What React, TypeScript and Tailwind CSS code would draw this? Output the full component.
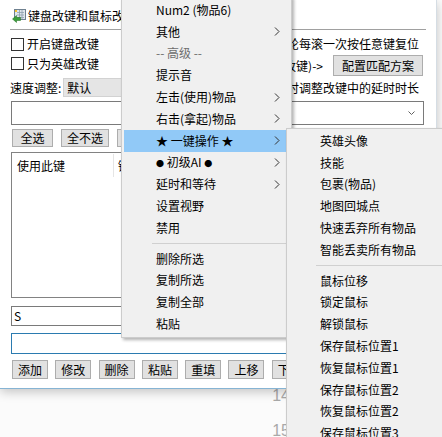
import React from "react";

const font = "font-['Noto_Sans_CJK_SC','Noto_Sans',sans-serif]";

function Chevron() {
  return (
    <svg width="6" height="9" viewBox="0 0 6 9" className="shrink-0">
      <path d="M1 0.5 L5 4.5 L1 8.5" fill="none" stroke="#333" strokeWidth="1" />
    </svg>
  );
}

function Btn({ label, w, className = "" }: { label: string; w: string; className?: string }) {
  return (
    <div
      className={`${w} h-full shrink-0 bg-[#e1e1e1] border border-[#adadad] flex items-center justify-center text-[12px] leading-none text-black ${className}`}
    >
      {label}
    </div>
  );
}

function Check({ label }: { label: string }) {
  return (
    <div className="flex items-center">
      <div className="w-[13px] h-[13px] border border-[#333] bg-white" />
      <span className="ml-[3px] text-[12px] leading-none">{label}</span>
    </div>
  );
}

type Item = { label?: React.ReactNode; arrow?: boolean; disabled?: boolean; active?: boolean; sep?: boolean };

const Dot = () => <span className="text-[8px] align-middle">●</span>;

const mainItems: Item[] = [
  { label: "Num2 (物品6)" },
  { label: "其他", arrow: true },
  { label: "-- 高级 --", disabled: true },
  { label: "提示音" },
  { label: "左击(使用)物品", arrow: true },
  { label: "右击(拿起)物品", arrow: true },
  { label: "★ 一键操作 ★", arrow: true, active: true },
  {
    label: (
      <>
        <Dot /> 初级AI <Dot />
      </>
    ),
    arrow: true,
  },
  { label: "延时和等待", arrow: true },
  { label: "设置视野" },
  { label: "禁用" },
  { sep: true },
  { label: "删除所选" },
  { label: "复制所选" },
  { label: "复制全部" },
  { label: "粘贴" },
];

const subItems: Item[] = [
  { label: "英雄头像" },
  { label: "技能" },
  { label: "包裹(物品)" },
  { label: "地图回城点" },
  { label: "快速丢弃所有物品" },
  { label: "智能丢卖所有物品" },
  { sep: true },
  { label: "鼠标位移" },
  { label: "锁定鼠标" },
  { label: "解锁鼠标" },
  { label: "保存鼠标位置1" },
  { label: "恢复鼠标位置1" },
  { label: "保存鼠标位置2" },
  { label: "恢复鼠标位置2" },
  { label: "保存鼠标位置3" },
];

function MenuRows({ items, pl, sepMl }: { items: Item[]; pl: string; sepMl: string }) {
  return (
    <>
      {items.map((it, i) =>
        it.sep ? (
          <div key={i} className="h-[9px] flex items-center">
            <div className={`${sepMl} flex-1 h-px bg-[#d0d0d0]`} />
          </div>
        ) : (
          <div
            key={i}
            className={`h-[21.8px] flex items-center ${pl} pr-[6px] ${it.active ? "bg-[#91c9f7]" : ""}`}
          >
            <span className={`flex-1 text-[12px] leading-none whitespace-nowrap ${it.disabled ? "text-[#6d6d6d]" : "text-black"}`}>
              {it.label}
            </span>
            {it.arrow && <Chevron />}
          </div>
        )
      )}
    </>
  );
}

function AppIcon() {
  return (
    <svg width="14" height="14" viewBox="0 0 14 14">
      <rect x="2.5" y="0.5" width="11" height="10" fill="#dfe6ec" stroke="#6f8190" />
      <path d="M5 3.5h7M5 6h7M5 8.5h7M7.5 1v9M10 1v9" stroke="#8d9fad" strokeWidth="0.8" />
      <rect x="3" y="1" width="2" height="2" fill="#f0c030" />
      <path d="M0.5 10 L4.5 6.5 L4.5 8.5 L8.5 8.5 L8.5 11.5 L4.5 11.5 L4.5 13.5 Z" fill="#3a9f3a" stroke="#1f6f1f" strokeWidth="0.5" />
    </svg>
  );
}

export default function App() {
  return (
    <div className={`relative w-[442px] h-[437px] overflow-hidden bg-[#fbfbfb] text-black ${font}`}>
      {/* window behind */}
      <div className="absolute left-[254px] top-[378px] w-[36px] text-right text-[16px] leading-[35px] text-[#a9a9a9] font-['Liberation_Sans',sans-serif]">
        <div>14</div>
        <div>15</div>
      </div>

      {/* dialog */}
      <div className="absolute left-0 top-0 w-[437px] h-[389px] bg-white border-r border-b border-r-[#d5dde4] border-b-[#86b4d4] shadow-[0_3px_10px_rgba(0,0,0,0.22)] flex flex-col">
        <div className="h-[29px] flex items-start pt-[9px] pl-[12px]">
          <AppIcon />
          <span className="ml-[2px] text-[12px] leading-[14px] whitespace-nowrap">键盘改键和鼠标改键</span>
        </div>
        <div className="ml-[10px] w-[416px] h-px bg-[#a0a0a0]" />

        <div className="pl-[11px] pr-[12px] flex flex-col">
          <div className="mt-[7px] h-[14px] flex items-center justify-between">
            <Check label="开启键盘改键" />
            <span className="mr-[5px] text-[12px] leading-none whitespace-nowrap">滚轮每滚一次按任意键复位</span>
          </div>

          <div className="mt-[4px] h-[21px] flex items-start justify-between">
            <div className="mt-[2px]">
              <Check label="只为英雄改键" />
            </div>
            <div className="h-full flex items-center">
              <span className="text-[12px] leading-none whitespace-nowrap">(改键)-&gt;</span>
              <Btn label="配置匹配方案" w="w-[90px]" className="ml-[10px] mr-[1px]" />
            </div>
          </div>

          <div className="mt-[2px] h-[19px] flex items-center justify-between">
            <div className="flex items-center h-full">
              <span className="-ml-[1px] text-[12px] leading-none whitespace-nowrap">速度调整:</span>
              <div className="ml-[2px] w-[140px] h-full bg-[#e5e5e5] border border-[#d2d2d2] flex items-center pl-[3px] text-[12px] leading-none">
                默认
              </div>
            </div>
            <span className="mr-[5px] text-[12px] leading-none whitespace-nowrap">延时调整改键中的延时时长</span>
          </div>

          <div className="mt-[4px] h-[24px] border border-[#7a7a7a] bg-white flex items-center justify-end pr-[8px]">
            <svg width="7" height="4" viewBox="0 0 7 4">
              <path d="M0.5 0.5 L3.5 3.5 L6.5 0.5" fill="none" stroke="#606060" strokeWidth="1" />
            </svg>
          </div>

          <div className="mt-[4px] h-[18px] flex gap-[8px] pl-[1px]">
            <Btn label="全选" w="w-[41px]" />
            <Btn label="全不选" w="w-[48px]" />
            <Btn label="反选" w="w-[41px]" />
          </div>

          <div className="mt-[5px] h-[146px] border border-[#828282] bg-white">
            <div className="h-[25px] flex items-center">
              <span className="pl-[5px] w-[101px] text-[12px] leading-none">使用此键</span>
              <div className="w-px h-[23px] bg-[#e5e5e5]" />
              <span className="pl-[4px] text-[12px] leading-none">键</span>
            </div>
          </div>

          <div className="mt-[8px] h-[20px] border border-[#7a7a7a] bg-white flex items-center pl-[2px] text-[12px] leading-none">
            S
          </div>

          <div className="mt-[7px] h-[21px] border border-[#2b7bb0] bg-white" />

          <div className="mt-[6px] h-[19px] flex gap-[7.3px] pl-[1px]">
            {["添加", "修改", "删除", "粘贴", "重填", "上移", "下移"].map((b) => (
              <Btn key={b} label={b} w="w-[36px]" />
            ))}
          </div>
        </div>
      </div>

      {/* context menu */}
      <div className="absolute left-[121px] top-[-4px] w-[171px] bg-[#f0f0f0] border border-[#cccccc] shadow-[2px_2px_3px_rgba(0,0,0,0.3)] pt-[2px] pb-[2px] pl-[2px] pr-[5px]">
        <MenuRows items={mainItems} pl="pl-[32px]" sepMl="ml-[28px]" />
      </div>

      {/* submenu */}
      <div className="absolute left-[286px] top-[128px] w-[200px] bg-[#f0f0f0] border border-[#cccccc] shadow-[2px_2px_3px_rgba(0,0,0,0.3)] pt-[1px] px-[2px]">
        <MenuRows items={subItems} pl="pl-[31px]" sepMl="ml-[27px]" />
      </div>
    </div>
  );
}
